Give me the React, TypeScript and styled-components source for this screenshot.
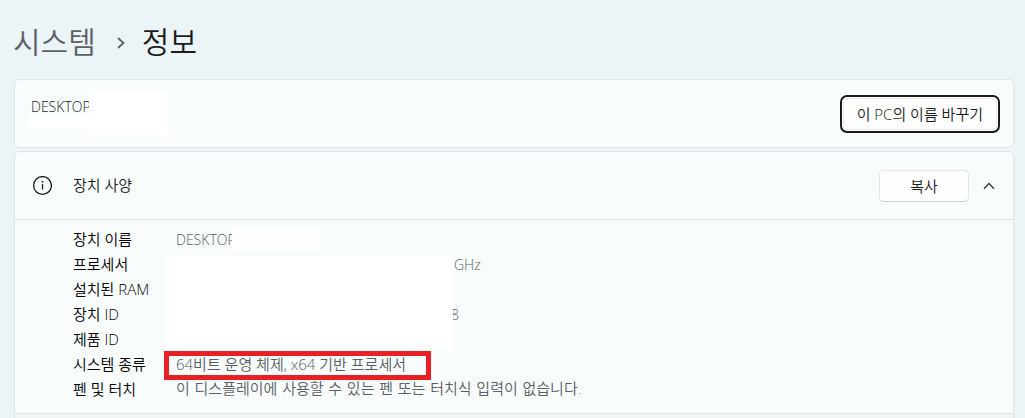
import React from "react";
import styled, { createGlobalStyle } from "styled-components";

const hangulFont = `"DejaVu Sans", "Noto Sans CJK KR", sans-serif`;

const GlobalStyle = createGlobalStyle`
  * { box-sizing: border-box; }
  body {
    margin: 0;
    background: #ebf4f7;
    color: #1b1b1b;
    font-family: "Open Sans", "Noto Sans CJK KR", sans-serif;
    font-size: 15px;
    font-weight: 350;
    line-height: 25px;
  }
`;

const Page = styled.main`
  min-height: 100vh;
  padding: 20px 11px 0 14px;
`;

const Breadcrumb = styled.nav`
  display: flex;
  align-items: center;
  height: 44px;
  margin: 0 0 15px -1px;
  font-size: 30px;
  line-height: 44px;
`;

const Crumb = styled.a`
  color: #5d6163;
  text-decoration: none;
`;

const Current = styled.h1`
  margin: 0;
  font: inherit;
`;

const Separator = styled.svg`
  width: 8px;
  height: 12px;
  margin: 2px 17px 0 21px;
  fill: none;
  stroke: #5d6163;
  stroke-width: 1.8;
`;

const Card = styled.section`
  margin-bottom: 3px;
  border: 1px solid #dbe4e7;
  border-radius: 5px;
  background: #f8fcfd;
`;

const NameCard = styled(Card)`
  display: flex;
  align-items: center;
  justify-content: space-between;
  min-height: 69px;
  padding: 0 13px 0 16px;
`;

const DeviceName = styled.div`
  position: relative;
  align-self: flex-start;
  padding-top: 14px;
  font-size: 14px;
`;

const Mask = styled.span<{ $x: number; $y: number; $w: number; $h: number }>`
  position: absolute;
  left: ${(p) => p.$x}px;
  top: ${(p) => p.$y}px;
  width: ${(p) => p.$w}px;
  height: ${(p) => p.$h}px;
  background: #fff;
`;

const Button = styled.button<{ $focused?: boolean }>`
  min-width: 90px;
  height: ${(p) => (p.$focused ? 38 : 32)}px;
  padding: 0 15px;
  border: ${(p) => (p.$focused ? "2px solid #1b1b1b" : "1px solid #e0e6e8")};
  border-bottom-color: ${(p) => (p.$focused ? "#1b1b1b" : "#cbd0d2")};
  border-radius: ${(p) => (p.$focused ? 7 : 5)}px;
  background: #fefefe;
  box-shadow: ${(p) =>
    p.$focused ? "inset 0 0 0 1px #fefefe, inset 0 0 0 2px #e6e9ea" : "none"};
  color: #1b1b1b;
  font: inherit;
  line-height: 20px;
`;

const CardHeader = styled.header`
  display: flex;
  align-items: center;
  height: 68px;
  padding: 0 14px 0 17px;
  border-bottom: 1px solid #dbe4e7;
`;

const InfoIcon = styled.svg`
  width: 20px;
  height: 20px;
  margin-right: 21px;
  fill: none;
  stroke: #1b1b1b;
`;

const CardTitle = styled.h2`
  flex: 1;
  margin: 0;
  font: inherit;
`;

const Collapse = styled.button`
  display: flex;
  align-items: center;
  justify-content: center;
  width: 20px;
  height: 32px;
  margin-left: 10px;
  padding: 0;
  border: 0;
  background: none;
  svg {
    width: 12px;
    height: 8px;
    fill: none;
    stroke: #33383a;
    stroke-width: 1.3;
  }
`;

const Specs = styled.dl`
  position: relative;
  margin: 0;
  padding: 7px 16px 11px 58px;
`;

const Row = styled.div`
  display: flex;
  height: 25px;
`;

const Label = styled.dt`
  width: 103px;
  color: #000;
`;

const Value = styled.dd<{ $latin?: boolean; $hangul?: boolean; $indent?: number }>`
  position: relative;
  margin: 0;
  padding-left: ${(p) => p.$indent ?? 0}px;
  color: #5a5e61;
  font-family: ${(p) => (p.$hangul ? hangulFont : "inherit")};
  font-size: ${(p) => (p.$latin ? 14 : 15)}px;
`;

const Highlight = styled.span`
  position: absolute;
  top: -1px;
  left: -12px;
  width: 267px;
  height: 29px;
  border: 5px solid #e81f25;
`;

const RelatedLinks = styled.footer`
  height: 44px;
  border-top: 1px solid #dbe4e7;
  background: #f0f5f6;
`;

const Screen = styled.div`
  height: 100vh;
  overflow: hidden;
`;

export default function App() {
  return (
    <Screen>
      <GlobalStyle />
      <Page>
        <Breadcrumb>
          <Crumb href="#system">시스템</Crumb>
          <Separator viewBox="0 0 8 12" aria-hidden="true">
            <path d="M1 1l5.5 5L1 11" />
          </Separator>
          <Current>정보</Current>
        </Breadcrumb>

        <NameCard>
          <DeviceName>
            DESKTOP
            <Mask $x={-3} $y={35} $w={62} $h={13} />
            <Mask $x={58} $y={10} $w={80} $h={48} />
          </DeviceName>
          <Button $focused>이 PC의 이름 바꾸기</Button>
        </NameCard>

        <Card>
          <CardHeader>
            <InfoIcon viewBox="0 0 20 20" aria-hidden="true">
              <circle cx="10.5" cy="9.5" r="8.9" strokeWidth="1.3" />
              <path d="M10.5 8.1v5.4" strokeWidth="1.3" />
              <circle cx="10.5" cy="5.8" r="0.9" fill="#1b1b1b" stroke="none" />
            </InfoIcon>
            <CardTitle>장치 사양</CardTitle>
            <Button>복사</Button>
            <Collapse aria-label="접기" aria-expanded="true">
              <svg viewBox="0 0 12 8">
                <path d="M1 6.8L6 1.5l5 5.3" />
              </svg>
            </Collapse>
          </CardHeader>
          <Specs>
            <Row>
              <Label>장치 이름</Label>
              <Value $latin>
                DESKTOP
                <Mask $x={56} $y={-1} $w={88} $h={25} />
              </Value>
            </Row>
            <Row>
              <Label>프로세서</Label>
              <Value $latin $indent={278}>GHz</Value>
            </Row>
            <Row>
              <Label>설치된 RAM</Label>
            </Row>
            <Row>
              <Label>장치 ID</Label>
              <Value $latin $indent={275}>8</Value>
            </Row>
            <Row>
              <Label>제품 ID</Label>
            </Row>
            <Row>
              <Label>시스템 종류</Label>
              <Value>
                64비트 운영 체제, x64 기반 프로세서
                <Highlight />
              </Value>
            </Row>
            <Row>
              <Label>펜 및 터치</Label>
              <Value $hangul>이 디스플레이에 사용할 수 있는 펜 또는 터치식 입력이 없습니다.</Value>
            </Row>
            <Mask $x={150} $y={36} $w={288} $h={94} />
          </Specs>
          <RelatedLinks />
        </Card>
      </Page>
    </Screen>
  );
}
